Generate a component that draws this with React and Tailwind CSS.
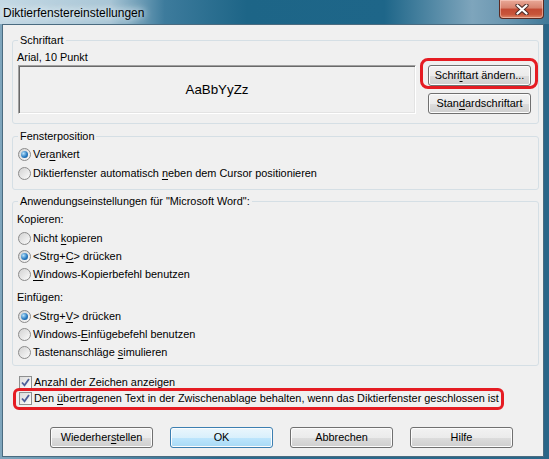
import React from 'react';

function CloseX() {
    return (
        <svg width="14" height="11" viewBox="0 0 14 11">
            <path d="M2.5 1.5 L11.5 9.5 M11.5 1.5 L2.5 9.5" stroke="#4a2a26" strokeWidth="4.2" strokeLinecap="round" fill="none" />
            <path d="M2.5 1.5 L11.5 9.5 M11.5 1.5 L2.5 9.5" stroke="#ffffff" strokeWidth="2.3" strokeLinecap="round" fill="none" />
        </svg>
    );
}

function Btn({ children, def = false, className = "" }) {
    const look = def
        ? "border-[#3c7fb1] bg-[linear-gradient(#eaf6fd,#d9f0fc_50%,#bee6fd_50%,#a7d9f5)]"
        : "border-[#707070] bg-[linear-gradient(#f2f2f2,#ebebeb_50%,#dddddd_50%,#cfcfcf)]";
    return (
        <div className={"h-[21px] w-[103px] rounded-[3px] border flex items-center justify-center shadow-[inset_0_0_0_1px_#fcfcfc] leading-[13px] " + look + " " + className}>
            {children}
        </div>
    );
}

function Radio({ checked = false, children }) {
    return (
        <div className="flex items-center h-[17px]">
            <span className="ml-[5px] w-[13px] h-[13px] rounded-full border border-[#8b8b8b] bg-[linear-gradient(135deg,#d2d2d2,#fbfbfb)] flex items-center justify-center">
                {checked && (
                    <span className="w-[7px] h-[7px] rounded-full bg-[radial-gradient(circle_at_35%_35%,#b9e3fb,#2a7cc2_55%,#0d4c8c)]" />
                )}
            </span>
            <span className="ml-[2px] leading-[13px]">{children}</span>
        </div>
    );
}

function Check({ children }) {
    return (
        <div className="flex items-center h-[16px]">
            <span className="ml-[7px] w-[13px] h-[13px] border border-[#8e8f8f] bg-[linear-gradient(135deg,#dcdcdc,#fbfbfb)] flex items-center justify-center">
                <svg width="9" height="9" viewBox="0 0 9 9">
                    <path d="M1 4.5 L3.5 7.3 L8 1" stroke="#4d5f99" strokeWidth="1.8" fill="none" />
                </svg>
            </span>
            <span className="ml-[2px] leading-[13px]">{children}</span>
        </div>
    );
}

function Group({ title, className = "", children }) {
    return (
        <fieldset className={"w-[527px] rounded-[3px] border border-[#d5dfe5] " + className}>
            <legend className="ml-[5px] px-[2px] leading-[13px]">{title}</legend>
            {children}
        </fieldset>
    );
}

function U({ children }) {
    return <span className="underline underline-offset-[2px]">{children}</span>;
}

export default function App() {
    return (
        <div className="w-[549px] h-[459px] flex flex-col overflow-hidden bg-[linear-gradient(90deg,#7fa6bd,#2c6a8d_40%,#2a6688)] font-['Liberation_Sans',Arial,sans-serif] text-[10.9px] text-black">
            {/* title bar */}
            <div className="h-[24px] flex items-start bg-[linear-gradient(90deg,#c4d9e5_0%,#a9c6d6_20%,#3d7b9c_30%,#1d6587_45%,#1e6689_70%,#7ea5bc_86%,#6b97b1_92%,#3f7898_100%)]">
                <div className="mt-[5px] pl-[3px] text-[12px] leading-[16px] [text-shadow:0_0_6px_#e8f1f6,0_0_10px_#e8f1f6]">
                    Diktierfenstereinstellungen
                </div>
                <div className="ml-auto mr-[5px] w-[45px] h-[19px] rounded-b-[4px] border border-t-0 border-[#5a2a22] bg-[linear-gradient(#e9a998,#d7826d_45%,#c24a33_50%,#c8553a_80%,#dd8a6a)] shadow-[inset_0_0_0_1px_rgba(255,220,210,0.5)] flex items-center justify-center">
                    <CloseX />
                </div>
            </div>

            {/* client area */}
            <div className="flex-1 ml-[2px] mr-[5px] mb-[2px] border border-[#4a6b80] bg-[#f0f0f0] pl-[9px] pt-[9px]">
                <Group title="Schriftart">
                    <div className="pl-[4px] pr-[7px] pb-[9px]">
                        <div className="mt-[4px] leading-[13px]">Arial, 10 Punkt</div>
                        <div className="mt-[1px] ml-[1px] flex gap-[12px]">
                            <div className="w-[398px] h-[49px] border border-t-[#a0a0a0] border-l-[#a0a0a0] border-b-white border-r-white shadow-[inset_1px_1px_0_#696969,inset_-1px_-1px_0_#e3e3e3] flex items-center justify-center text-[13.33px]">
                                AaBbYyZz
                            </div>
                            <div className="flex flex-col gap-[7px]">
                                <div className="relative">
                                    <Btn>Schri<U>f</U>tart ändern...</Btn>
                                    <div className="absolute left-[-8px] top-[-7px] w-[118px] h-[31px] rounded-[8px] border-[3px] border-[#e51c23]" />
                                </div>
                                <Btn>Stan<U>d</U>ardschriftart</Btn>
                            </div>
                        </div>
                    </div>
                </Group>

                <Group title="Fensterposition" className="mt-[6px]">
                    <div className="pt-[3px] pb-[7px] flex flex-col gap-[2px]">
                        <Radio checked>Ver<U>a</U>nkert</Radio>
                        <Radio>Diktierfenster automatisch <U>n</U>eben dem Cursor positionieren</Radio>
                    </div>
                </Group>

                <Group title={'Anwendungseinstellungen für "Microsoft Word":'} className="mt-[5px]">
                    <div className="pb-[4px]">
                        <div className="mt-[5px] ml-[4px] leading-[13px]">Kopieren:</div>
                        <div className="mt-[4px] flex flex-col gap-[1px]">
                            <Radio>Nicht <U>k</U>opieren</Radio>
                            <Radio checked>&lt;Strg+<U>C</U>&gt; drücken</Radio>
                            <Radio><U>W</U>indows-Kopierbefehl benutzen</Radio>
                        </div>
                        <div className="mt-[8px] ml-[4px] leading-[13px]">Einfügen:</div>
                        <div className="mt-[4px] flex flex-col gap-[1px]">
                            <Radio checked>&lt;Strg+<U>V</U>&gt; drücken</Radio>
                            <Radio>Windows-<U>E</U>infügebefehl benutzen</Radio>
                            <Radio>Tastenanschläge <U>s</U>imulieren</Radio>
                        </div>
                    </div>
                </Group>

                <div className="mt-[8px]">
                    <Check><U>A</U>nzahl der Zeichen anzeigen</Check>
                    <div className="relative">
                        <Check>Den <U>ü</U>bertragenen Text in der Zwischenablage behalten, wenn das Diktierfenster geschlossen ist</Check>
                        <div className="absolute left-[1px] top-[-2px] w-[491px] h-[22px] rounded-[6px] border-[3px] border-[#e51c23]" />
                    </div>
                </div>

                <div className="mt-[21px] ml-[38px] flex gap-[17px]">
                    <Btn>Wiederher<U>s</U>tellen</Btn>
                    <Btn def>OK</Btn>
                    <Btn>Abbrechen</Btn>
                    <Btn>Hilfe</Btn>
                </div>
            </div>
        </div>
    );
}
